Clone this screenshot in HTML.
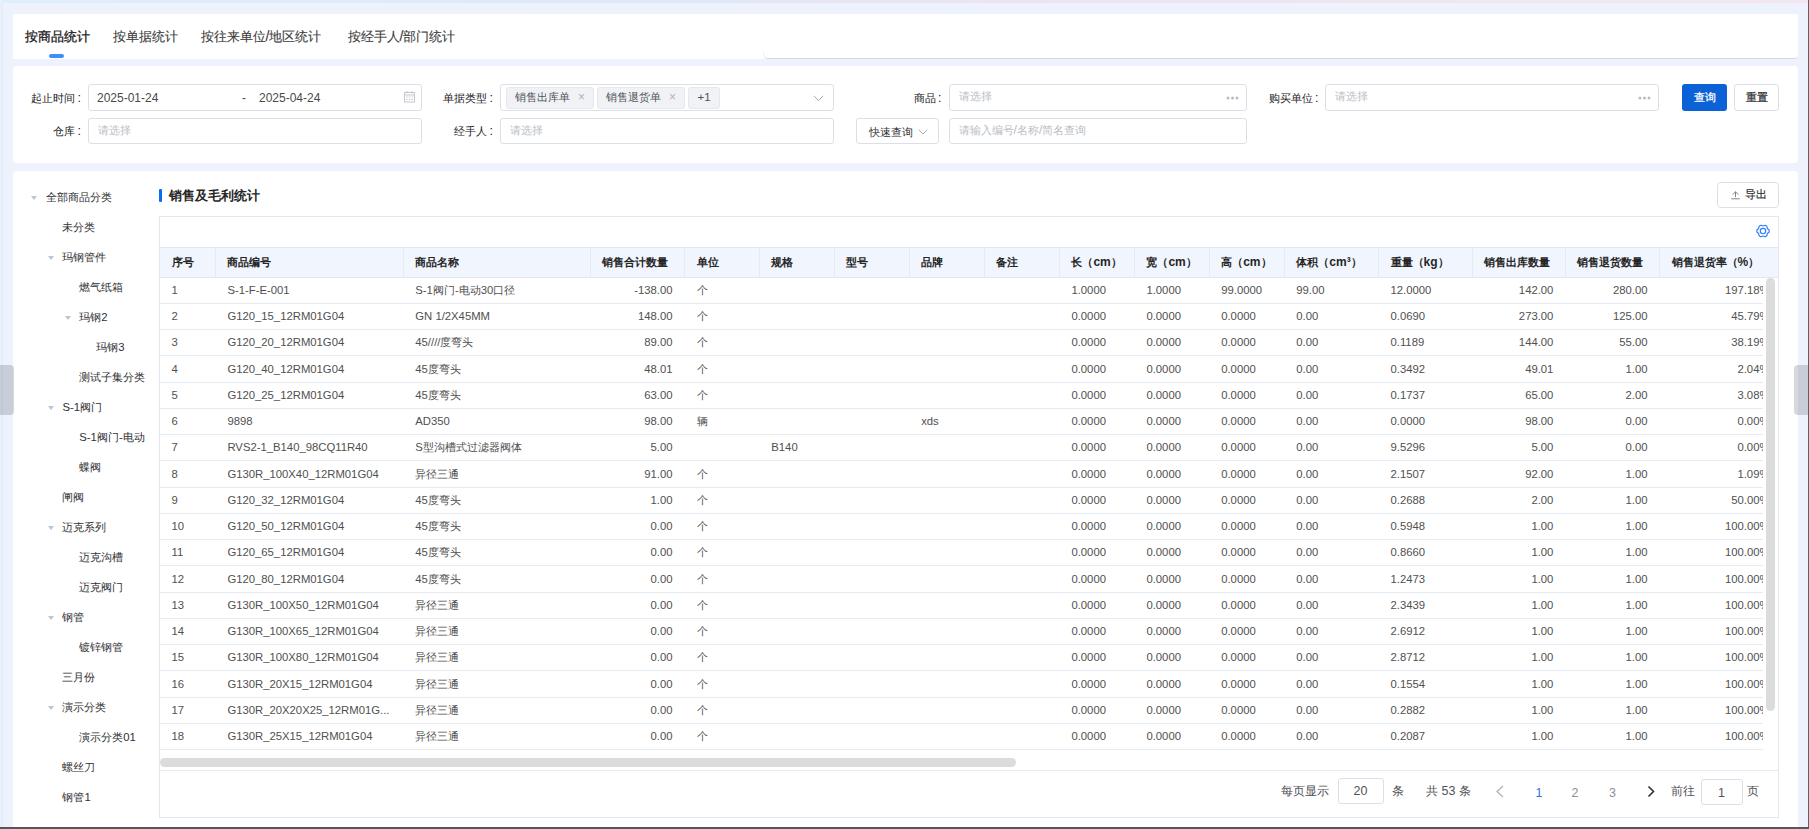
<!DOCTYPE html><html><head><meta charset="utf-8"><style>
*{box-sizing:border-box;margin:0;padding:0}
html,body{width:1809px;height:829px;overflow:hidden}
body{position:relative;background:#eef2fc;font-family:"Liberation Sans",sans-serif;color:#333;font-size:12px}
.a{position:absolute}
.nw{white-space:nowrap}
.c{font-size:0.92em}
.topstrip{left:0;top:0;width:1809px;height:3px;background:linear-gradient(90deg,#ddeefc 0%,#dde9f9 33%,#ece4f2 55%,#f3e6f0 100%)}
.leftstrip{left:0;top:0;width:2px;height:829px;background:#e5f1fd}
.leftline{left:2px;top:3px;width:1px;height:826px;background:#e8ebf3}
.card{background:#fff}
.tab{top:22px;height:28px;line-height:28px;font-size:14.2px;color:#303133}
.lbl{font-size:12.4px;color:#222;text-align:right;white-space:nowrap}
.inp{background:#fff;border:1px solid #dcdfe6;border-radius:3px}
.ph{color:#b9bdc5;font-size:12.4px;white-space:nowrap}
.tag{background:#f0f2f5;border:1px solid #e4e7ed;border-radius:3px;color:#505257;font-size:11.5px;white-space:nowrap}
.tree{font-size:11.3px;color:#303133;white-space:nowrap}
.tri{width:0;height:0;border-left:3.5px solid transparent;border-right:3.5px solid transparent;border-top:4px solid #c0c4cc}
.td .c{font-size:11px}
.tree .c{font-size:11.15px}
.th{font-weight:bold;color:#262626;font-size:12px;white-space:nowrap}
.td{color:#505050;font-size:11.3px;white-space:nowrap}
.pg{font-size:12.5px}
.pg .c{font-size:12.4px}
.hl{height:1px;background:#e6eaf2}
.vl{width:1px;background:#e6eaf2}
</style></head><body>
<div class="a topstrip"></div><div class="a leftstrip"></div><div class="a leftline"></div>
<div class="a" style="left:1808px;top:0;width:1px;height:829px;background:#606068"></div>
<div class="a card" style="left:13px;top:14px;width:1785px;height:45px;border-radius:0 0 4px 0"></div>
<div class="a" style="left:763px;top:52.5px;width:1035px;height:6.5px;border-left:1px solid #ebecf0;border-bottom:1px solid #d8d9e0;border-radius:0 0 4px 5px"></div>
<div class="a tab nw" style="left:24.5px;color:#1a1a1a;-webkit-text-stroke:0.3px #1a1a1a"><span class="c">按商品统计</span></div>
<div class="a tab nw" style="left:112.5px;color:#3c3c3c;-webkit-text-stroke:0.12px #3c3c3c"><span class="c">按单据统计</span></div>
<div class="a tab nw" style="left:200.5px;color:#3c3c3c;-webkit-text-stroke:0.12px #3c3c3c"><span class="c">按往来单位</span>/<span class="c">地区统计</span></div>
<div class="a tab nw" style="left:347.5px;color:#3c3c3c;-webkit-text-stroke:0.12px #3c3c3c"><span class="c">按经手人</span>/<span class="c">部门统计</span></div>
<div class="a" style="left:49px;top:54px;width:15px;height:4px;border-radius:2px;background:#3e8ef7"></div>
<div class="a card" style="left:13px;top:66px;width:1785px;height:97px;border-radius:4px"></div>
<div class="a lbl" style="right:1728px;top:89.5px;line-height:16px"><span class="c">起止时间</span><span style="margin-left:2.5px">:</span></div>
<div class="a lbl" style="right:1728px;top:123px;line-height:16px"><span class="c">仓库</span><span style="margin-left:2.5px">:</span></div>
<div class="a lbl" style="right:1316px;top:89.5px;line-height:16px"><span class="c">单据类型</span><span style="margin-left:2.5px">:</span></div>
<div class="a lbl" style="right:1316px;top:123px;line-height:16px"><span class="c">经手人</span><span style="margin-left:2.5px">:</span></div>
<div class="a lbl" style="right:867.5px;top:89.5px;line-height:16px"><span class="c">商品</span><span style="margin-left:2.5px">:</span></div>
<div class="a lbl" style="right:490.5px;top:89.5px;line-height:16px"><span class="c">购买单位</span><span style="margin-left:2.5px">:</span></div>
<div class="a inp" style="left:88px;top:84px;width:334px;height:27px"><div class="a nw" style="left:8px;top:5.3px;line-height:16px;color:#4a4a4a">2025-01-24</div><div class="a" style="left:153px;top:5.3px;line-height:16px;color:#4a4a4a">-</div><div class="a nw" style="left:170px;top:5.3px;line-height:16px;color:#4a4a4a">2025-04-24</div><svg class="a" style="left:314px;top:5.2px" width="13" height="13" viewBox="0 0 13 13"><g fill="none" stroke="#c4c7cf" stroke-width="1"><rect x="1.5" y="2.5" width="10" height="9.5"/><line x1="1.5" y1="5" x2="11.5" y2="5"/><line x1="4" y1="1" x2="4" y2="3.5"/><line x1="9" y1="1" x2="9" y2="3.5"/></g><g fill="#c4c7cf"><rect x="3" y="6.5" width="1.5" height="1"/><rect x="5.8" y="6.5" width="1.5" height="1"/><rect x="8.5" y="6.5" width="1.5" height="1"/><rect x="3" y="9" width="1.5" height="1"/><rect x="5.8" y="9" width="1.5" height="1"/><rect x="8.5" y="9" width="1.5" height="1"/></g></svg></div>
<div class="a inp" style="left:88px;top:118px;width:334px;height:26px"><div class="a ph" style="left:9px;top:3.4px;line-height:16px"><span class="c">请选择</span></div></div>
<div class="a inp" style="left:500px;top:84px;width:334px;height:27px"><div class="a tag" style="left:5px;top:1.8px;width:88px;height:22px;line-height:19px;padding-left:8px"><span class="c">销售出库单</span><span class="a" style="left:71px;top:0.5px;color:#b0b3b9;font-size:12px">×</span></div><div class="a tag" style="left:96px;top:1.8px;width:88px;height:22px;line-height:19px;padding-left:8px"><span class="c">销售退货单</span><span class="a" style="left:71px;top:0.5px;color:#b0b3b9;font-size:12px">×</span></div><div class="a tag" style="left:187px;top:1.8px;width:32px;height:22px;line-height:19.5px;text-align:center">+1</div><svg class="a" style="left:312px;top:10px" width="11" height="7" viewBox="0 0 11 7"><polyline points="0.8,0.8 5.5,5.5 10.2,0.8" fill="none" stroke="#a8abb2" stroke-width="1"/></svg></div>
<div class="a inp" style="left:500px;top:118px;width:334px;height:26px"><div class="a ph" style="left:9px;top:3.4px;line-height:16px"><span class="c">请选择</span></div></div>
<div class="a inp" style="left:948.5px;top:84px;width:298px;height:27px"><div class="a ph" style="left:9px;top:3.4px;line-height:16px"><span class="c">请选择</span></div><svg class="a" style="left:276px;top:11px" width="13" height="4" viewBox="0 0 13 4"><circle cx="2" cy="2" r="1.5" fill="#b9bcc3"/><circle cx="6.5" cy="2" r="1.5" fill="#b9bcc3"/><circle cx="11" cy="2" r="1.5" fill="#b9bcc3"/></svg></div>
<div class="a inp" style="left:1325px;top:84px;width:333.5px;height:27px"><div class="a ph" style="left:9px;top:3.4px;line-height:16px"><span class="c">请选择</span></div><svg class="a" style="left:312px;top:11px" width="13" height="4" viewBox="0 0 13 4"><circle cx="2" cy="2" r="1.5" fill="#b9bcc3"/><circle cx="6.5" cy="2" r="1.5" fill="#b9bcc3"/><circle cx="11" cy="2" r="1.5" fill="#b9bcc3"/></svg></div>
<div class="a inp" style="left:856px;top:118px;width:82.5px;height:26px"><div class="a nw" style="left:12px;top:5px;line-height:16px;color:#303133"><span class="c">快速查询</span></div><svg class="a" style="left:61px;top:10px" width="10" height="6" viewBox="0 0 10 6"><polyline points="0.7,0.7 5,5 9.3,0.7" fill="none" stroke="#a8abb2" stroke-width="1"/></svg></div>
<div class="a inp" style="left:948.5px;top:118px;width:298px;height:26px"><div class="a ph" style="left:9px;top:3.4px;line-height:16px"><span class="c">请输入编号</span>/<span class="c">名称</span>/<span class="c">简名查询</span></div></div>
<div class="a" style="left:1682px;top:84px;width:45px;height:27px;background:#0b62d6;border-radius:3px;color:#fff;text-align:center;line-height:27px;font-size:12.3px;-webkit-text-stroke:0.25px #fff"><span class="c">查询</span></div>
<div class="a inp" style="left:1734px;top:84px;width:45px;height:27px;color:#303133;text-align:center;line-height:25px;font-size:12.3px;-webkit-text-stroke:0.25px #303133"><span class="c">重置</span></div>
<div class="a card" style="left:13px;top:171px;width:1785px;height:700px;border-radius:4px"></div>
<div class="a tri" style="left:31px;top:195.8px"></div>
<div class="a tree" style="left:45.5px;top:189.3px;line-height:16px"><span class="c">全部商品分类</span></div>
<div class="a tree" style="left:62.4px;top:219.3px;line-height:16px"><span class="c">未分类</span></div>
<div class="a tri" style="left:47.9px;top:255.8px"></div>
<div class="a tree" style="left:62.4px;top:249.3px;line-height:16px"><span class="c">玛钢管件</span></div>
<div class="a tree" style="left:79.3px;top:279.3px;line-height:16px"><span class="c">燃气纸箱</span></div>
<div class="a tri" style="left:64.8px;top:315.8px"></div>
<div class="a tree" style="left:79.3px;top:309.3px;line-height:16px"><span class="c">玛钢</span>2</div>
<div class="a tree" style="left:96.2px;top:339.3px;line-height:16px"><span class="c">玛钢</span>3</div>
<div class="a tree" style="left:79.3px;top:369.3px;line-height:16px"><span class="c">测试子集分类</span></div>
<div class="a tri" style="left:47.9px;top:405.8px"></div>
<div class="a tree" style="left:62.4px;top:399.3px;line-height:16px">S-1<span class="c">阀门</span></div>
<div class="a tree" style="left:79.3px;top:429.3px;line-height:16px">S-1<span class="c">阀门</span>-<span class="c">电动</span></div>
<div class="a tree" style="left:79.3px;top:459.3px;line-height:16px"><span class="c">蝶阀</span></div>
<div class="a tree" style="left:62.4px;top:489.3px;line-height:16px"><span class="c">闸阀</span></div>
<div class="a tri" style="left:47.9px;top:525.8px"></div>
<div class="a tree" style="left:62.4px;top:519.3px;line-height:16px"><span class="c">迈克系列</span></div>
<div class="a tree" style="left:79.3px;top:549.3px;line-height:16px"><span class="c">迈克沟槽</span></div>
<div class="a tree" style="left:79.3px;top:579.3px;line-height:16px"><span class="c">迈克阀门</span></div>
<div class="a tri" style="left:47.9px;top:615.8px"></div>
<div class="a tree" style="left:62.4px;top:609.3px;line-height:16px"><span class="c">钢管</span></div>
<div class="a tree" style="left:79.3px;top:639.3px;line-height:16px"><span class="c">镀锌钢管</span></div>
<div class="a tree" style="left:62.4px;top:669.3px;line-height:16px"><span class="c">三月份</span></div>
<div class="a tri" style="left:47.9px;top:705.8px"></div>
<div class="a tree" style="left:62.4px;top:699.3px;line-height:16px"><span class="c">演示分类</span></div>
<div class="a tree" style="left:79.3px;top:729.3px;line-height:16px"><span class="c">演示分类</span>01</div>
<div class="a tree" style="left:62.4px;top:759.3px;line-height:16px"><span class="c">螺丝刀</span></div>
<div class="a tree" style="left:62.4px;top:789.3px;line-height:16px"><span class="c">钢管</span>1</div>
<div class="a" style="left:0;top:365px;width:13.5px;height:50px;background:rgba(20,25,40,0.17);border-radius:0 4px 4px 0"></div>
<div class="a" style="left:1794px;top:365px;width:14px;height:50px;background:rgba(20,25,40,0.17);border-radius:4px 0 0 4px"></div>
<div class="a" style="left:159px;top:189px;width:3px;height:12.5px;background:#0a6cf5;border-radius:1px"></div>
<div class="a nw" style="left:168.5px;top:186px;line-height:18px;font-size:14.25px;font-weight:bold;color:#262626"><span class="c">销售及毛利统计</span></div>
<div class="a inp" style="left:1717px;top:182px;width:62px;height:26px;border-radius:4px"><svg class="a" style="left:12.5px;top:8px" width="9" height="9" viewBox="0 0 9 9"><g fill="none" stroke="#777" stroke-width="0.9"><line x1="0.3" y1="7.8" x2="8.7" y2="7.8"/><line x1="4.5" y1="0.8" x2="4.5" y2="6.2"/><polyline points="1.6,3.6 4.5,0.8 7.4,3.6"/></g></svg><div class="a nw" style="left:27px;top:3px;line-height:16px;color:#303133;font-size:12.3px;-webkit-text-stroke:0.2px #303133"><span class="c">导出</span></div></div>
<div class="a" style="left:159px;top:216px;width:1620px;height:601.5px;border:1px solid #e3e7f0"></div>
<svg class="a" style="left:1756.2px;top:224.4px" width="14" height="14" viewBox="0 0 14 14"><polygon points="13.12,6.03 13.12,7.97 11.33,9.50 10.90,11.82 9.22,12.79 7.00,12.00 4.78,12.79 3.10,11.82 2.67,9.50 0.88,7.97 0.88,6.03 2.67,4.50 3.10,2.18 4.78,1.21 7.00,2.00 9.22,1.21 10.90,2.18 11.33,4.50" fill="none" stroke="#2f7cff" stroke-width="1.15" stroke-linejoin="round"/><circle cx="7" cy="7" r="2.7" fill="none" stroke="#2f7cff" stroke-width="1.15"/></svg>
<div class="a" style="left:160px;top:247px;width:1618px;height:30.5px;background:#f1f5fd;border-top:1px solid #e3e7f0;border-bottom:1px solid #e3e7f0"></div>
<div class="a" style="left:160px;top:277.5px;width:1603px;height:472.5px;overflow:hidden">
<div class="a hl" style="left:0;top:25.25px;width:1625px"></div>
<div class="a td" style="left:11.5px;top:4.3px;line-height:16px">1</div>
<div class="a td" style="left:67.4px;top:4.3px;line-height:16px">S-1-F-E-001</div>
<div class="a td" style="left:255.3px;top:4.3px;line-height:16px">S-1<span class="c">阀门</span>-<span class="c">电动</span>30<span class="c">口径</span></div>
<div class="a td" style="right:1090.5px;top:4.3px;line-height:16px">-138.00</div>
<div class="a td" style="left:536.5px;top:4.3px;line-height:16px"><span class="c">个</span></div>
<div class="a td" style="left:911.4px;top:4.3px;line-height:16px">1.0000</div>
<div class="a td" style="left:986.4px;top:4.3px;line-height:16px">1.0000</div>
<div class="a td" style="left:1061.2px;top:4.3px;line-height:16px">99.0000</div>
<div class="a td" style="left:1136.3px;top:4.3px;line-height:16px">99.00</div>
<div class="a td" style="left:1230.5px;top:4.3px;line-height:16px">12.0000</div>
<div class="a td" style="right:209.6px;top:4.3px;line-height:16px">142.00</div>
<div class="a td" style="right:115.5px;top:4.3px;line-height:16px">280.00</div>
<div class="a td" style="right:-6.5px;top:4.3px;line-height:16px">197.18%</div>
<div class="a hl" style="left:0;top:51.5px;width:1625px"></div>
<div class="a td" style="left:11.5px;top:30.55px;line-height:16px">2</div>
<div class="a td" style="left:67.4px;top:30.55px;line-height:16px">G120_15_12RM01G04</div>
<div class="a td" style="left:255.3px;top:30.55px;line-height:16px">GN 1/2X45MM</div>
<div class="a td" style="right:1090.5px;top:30.55px;line-height:16px">148.00</div>
<div class="a td" style="left:536.5px;top:30.55px;line-height:16px"><span class="c">个</span></div>
<div class="a td" style="left:911.4px;top:30.55px;line-height:16px">0.0000</div>
<div class="a td" style="left:986.4px;top:30.55px;line-height:16px">0.0000</div>
<div class="a td" style="left:1061.2px;top:30.55px;line-height:16px">0.0000</div>
<div class="a td" style="left:1136.3px;top:30.55px;line-height:16px">0.00</div>
<div class="a td" style="left:1230.5px;top:30.55px;line-height:16px">0.0690</div>
<div class="a td" style="right:209.6px;top:30.55px;line-height:16px">273.00</div>
<div class="a td" style="right:115.5px;top:30.55px;line-height:16px">125.00</div>
<div class="a td" style="right:-6.5px;top:30.55px;line-height:16px">45.79%</div>
<div class="a hl" style="left:0;top:77.75px;width:1625px"></div>
<div class="a td" style="left:11.5px;top:56.8px;line-height:16px">3</div>
<div class="a td" style="left:67.4px;top:56.8px;line-height:16px">G120_20_12RM01G04</div>
<div class="a td" style="left:255.3px;top:56.8px;line-height:16px">45////<span class="c">度弯头</span></div>
<div class="a td" style="right:1090.5px;top:56.8px;line-height:16px">89.00</div>
<div class="a td" style="left:536.5px;top:56.8px;line-height:16px"><span class="c">个</span></div>
<div class="a td" style="left:911.4px;top:56.8px;line-height:16px">0.0000</div>
<div class="a td" style="left:986.4px;top:56.8px;line-height:16px">0.0000</div>
<div class="a td" style="left:1061.2px;top:56.8px;line-height:16px">0.0000</div>
<div class="a td" style="left:1136.3px;top:56.8px;line-height:16px">0.00</div>
<div class="a td" style="left:1230.5px;top:56.8px;line-height:16px">0.1189</div>
<div class="a td" style="right:209.6px;top:56.8px;line-height:16px">144.00</div>
<div class="a td" style="right:115.5px;top:56.8px;line-height:16px">55.00</div>
<div class="a td" style="right:-6.5px;top:56.8px;line-height:16px">38.19%</div>
<div class="a hl" style="left:0;top:104px;width:1625px"></div>
<div class="a td" style="left:11.5px;top:83.05px;line-height:16px">4</div>
<div class="a td" style="left:67.4px;top:83.05px;line-height:16px">G120_40_12RM01G04</div>
<div class="a td" style="left:255.3px;top:83.05px;line-height:16px">45<span class="c">度弯头</span></div>
<div class="a td" style="right:1090.5px;top:83.05px;line-height:16px">48.01</div>
<div class="a td" style="left:536.5px;top:83.05px;line-height:16px"><span class="c">个</span></div>
<div class="a td" style="left:911.4px;top:83.05px;line-height:16px">0.0000</div>
<div class="a td" style="left:986.4px;top:83.05px;line-height:16px">0.0000</div>
<div class="a td" style="left:1061.2px;top:83.05px;line-height:16px">0.0000</div>
<div class="a td" style="left:1136.3px;top:83.05px;line-height:16px">0.00</div>
<div class="a td" style="left:1230.5px;top:83.05px;line-height:16px">0.3492</div>
<div class="a td" style="right:209.6px;top:83.05px;line-height:16px">49.01</div>
<div class="a td" style="right:115.5px;top:83.05px;line-height:16px">1.00</div>
<div class="a td" style="right:-6.5px;top:83.05px;line-height:16px">2.04%</div>
<div class="a hl" style="left:0;top:130.25px;width:1625px"></div>
<div class="a td" style="left:11.5px;top:109.3px;line-height:16px">5</div>
<div class="a td" style="left:67.4px;top:109.3px;line-height:16px">G120_25_12RM01G04</div>
<div class="a td" style="left:255.3px;top:109.3px;line-height:16px">45<span class="c">度弯头</span></div>
<div class="a td" style="right:1090.5px;top:109.3px;line-height:16px">63.00</div>
<div class="a td" style="left:536.5px;top:109.3px;line-height:16px"><span class="c">个</span></div>
<div class="a td" style="left:911.4px;top:109.3px;line-height:16px">0.0000</div>
<div class="a td" style="left:986.4px;top:109.3px;line-height:16px">0.0000</div>
<div class="a td" style="left:1061.2px;top:109.3px;line-height:16px">0.0000</div>
<div class="a td" style="left:1136.3px;top:109.3px;line-height:16px">0.00</div>
<div class="a td" style="left:1230.5px;top:109.3px;line-height:16px">0.1737</div>
<div class="a td" style="right:209.6px;top:109.3px;line-height:16px">65.00</div>
<div class="a td" style="right:115.5px;top:109.3px;line-height:16px">2.00</div>
<div class="a td" style="right:-6.5px;top:109.3px;line-height:16px">3.08%</div>
<div class="a hl" style="left:0;top:156.5px;width:1625px"></div>
<div class="a td" style="left:11.5px;top:135.55px;line-height:16px">6</div>
<div class="a td" style="left:67.4px;top:135.55px;line-height:16px">9898</div>
<div class="a td" style="left:255.3px;top:135.55px;line-height:16px">AD350</div>
<div class="a td" style="right:1090.5px;top:135.55px;line-height:16px">98.00</div>
<div class="a td" style="left:536.5px;top:135.55px;line-height:16px"><span class="c">辆</span></div>
<div class="a td" style="left:761.2px;top:135.55px;line-height:16px">xds</div>
<div class="a td" style="left:911.4px;top:135.55px;line-height:16px">0.0000</div>
<div class="a td" style="left:986.4px;top:135.55px;line-height:16px">0.0000</div>
<div class="a td" style="left:1061.2px;top:135.55px;line-height:16px">0.0000</div>
<div class="a td" style="left:1136.3px;top:135.55px;line-height:16px">0.00</div>
<div class="a td" style="left:1230.5px;top:135.55px;line-height:16px">0.0000</div>
<div class="a td" style="right:209.6px;top:135.55px;line-height:16px">98.00</div>
<div class="a td" style="right:115.5px;top:135.55px;line-height:16px">0.00</div>
<div class="a td" style="right:-6.5px;top:135.55px;line-height:16px">0.00%</div>
<div class="a hl" style="left:0;top:182.75px;width:1625px"></div>
<div class="a td" style="left:11.5px;top:161.8px;line-height:16px">7</div>
<div class="a td" style="left:67.4px;top:161.8px;line-height:16px">RVS2-1_B140_98CQ11R40</div>
<div class="a td" style="left:255.3px;top:161.8px;line-height:16px">S<span class="c">型沟槽式过滤器阀体</span></div>
<div class="a td" style="right:1090.5px;top:161.8px;line-height:16px">5.00</div>
<div class="a td" style="left:611.3px;top:161.8px;line-height:16px">B140</div>
<div class="a td" style="left:911.4px;top:161.8px;line-height:16px">0.0000</div>
<div class="a td" style="left:986.4px;top:161.8px;line-height:16px">0.0000</div>
<div class="a td" style="left:1061.2px;top:161.8px;line-height:16px">0.0000</div>
<div class="a td" style="left:1136.3px;top:161.8px;line-height:16px">0.00</div>
<div class="a td" style="left:1230.5px;top:161.8px;line-height:16px">9.5296</div>
<div class="a td" style="right:209.6px;top:161.8px;line-height:16px">5.00</div>
<div class="a td" style="right:115.5px;top:161.8px;line-height:16px">0.00</div>
<div class="a td" style="right:-6.5px;top:161.8px;line-height:16px">0.00%</div>
<div class="a hl" style="left:0;top:209px;width:1625px"></div>
<div class="a td" style="left:11.5px;top:188.05px;line-height:16px">8</div>
<div class="a td" style="left:67.4px;top:188.05px;line-height:16px">G130R_100X40_12RM01G04</div>
<div class="a td" style="left:255.3px;top:188.05px;line-height:16px"><span class="c">异径三通</span></div>
<div class="a td" style="right:1090.5px;top:188.05px;line-height:16px">91.00</div>
<div class="a td" style="left:536.5px;top:188.05px;line-height:16px"><span class="c">个</span></div>
<div class="a td" style="left:911.4px;top:188.05px;line-height:16px">0.0000</div>
<div class="a td" style="left:986.4px;top:188.05px;line-height:16px">0.0000</div>
<div class="a td" style="left:1061.2px;top:188.05px;line-height:16px">0.0000</div>
<div class="a td" style="left:1136.3px;top:188.05px;line-height:16px">0.00</div>
<div class="a td" style="left:1230.5px;top:188.05px;line-height:16px">2.1507</div>
<div class="a td" style="right:209.6px;top:188.05px;line-height:16px">92.00</div>
<div class="a td" style="right:115.5px;top:188.05px;line-height:16px">1.00</div>
<div class="a td" style="right:-6.5px;top:188.05px;line-height:16px">1.09%</div>
<div class="a hl" style="left:0;top:235.25px;width:1625px"></div>
<div class="a td" style="left:11.5px;top:214.3px;line-height:16px">9</div>
<div class="a td" style="left:67.4px;top:214.3px;line-height:16px">G120_32_12RM01G04</div>
<div class="a td" style="left:255.3px;top:214.3px;line-height:16px">45<span class="c">度弯头</span></div>
<div class="a td" style="right:1090.5px;top:214.3px;line-height:16px">1.00</div>
<div class="a td" style="left:536.5px;top:214.3px;line-height:16px"><span class="c">个</span></div>
<div class="a td" style="left:911.4px;top:214.3px;line-height:16px">0.0000</div>
<div class="a td" style="left:986.4px;top:214.3px;line-height:16px">0.0000</div>
<div class="a td" style="left:1061.2px;top:214.3px;line-height:16px">0.0000</div>
<div class="a td" style="left:1136.3px;top:214.3px;line-height:16px">0.00</div>
<div class="a td" style="left:1230.5px;top:214.3px;line-height:16px">0.2688</div>
<div class="a td" style="right:209.6px;top:214.3px;line-height:16px">2.00</div>
<div class="a td" style="right:115.5px;top:214.3px;line-height:16px">1.00</div>
<div class="a td" style="right:-6.5px;top:214.3px;line-height:16px">50.00%</div>
<div class="a hl" style="left:0;top:261.5px;width:1625px"></div>
<div class="a td" style="left:11.5px;top:240.55px;line-height:16px">10</div>
<div class="a td" style="left:67.4px;top:240.55px;line-height:16px">G120_50_12RM01G04</div>
<div class="a td" style="left:255.3px;top:240.55px;line-height:16px">45<span class="c">度弯头</span></div>
<div class="a td" style="right:1090.5px;top:240.55px;line-height:16px">0.00</div>
<div class="a td" style="left:536.5px;top:240.55px;line-height:16px"><span class="c">个</span></div>
<div class="a td" style="left:911.4px;top:240.55px;line-height:16px">0.0000</div>
<div class="a td" style="left:986.4px;top:240.55px;line-height:16px">0.0000</div>
<div class="a td" style="left:1061.2px;top:240.55px;line-height:16px">0.0000</div>
<div class="a td" style="left:1136.3px;top:240.55px;line-height:16px">0.00</div>
<div class="a td" style="left:1230.5px;top:240.55px;line-height:16px">0.5948</div>
<div class="a td" style="right:209.6px;top:240.55px;line-height:16px">1.00</div>
<div class="a td" style="right:115.5px;top:240.55px;line-height:16px">1.00</div>
<div class="a td" style="right:-6.5px;top:240.55px;line-height:16px">100.00%</div>
<div class="a hl" style="left:0;top:287.75px;width:1625px"></div>
<div class="a td" style="left:11.5px;top:266.8px;line-height:16px">11</div>
<div class="a td" style="left:67.4px;top:266.8px;line-height:16px">G120_65_12RM01G04</div>
<div class="a td" style="left:255.3px;top:266.8px;line-height:16px">45<span class="c">度弯头</span></div>
<div class="a td" style="right:1090.5px;top:266.8px;line-height:16px">0.00</div>
<div class="a td" style="left:536.5px;top:266.8px;line-height:16px"><span class="c">个</span></div>
<div class="a td" style="left:911.4px;top:266.8px;line-height:16px">0.0000</div>
<div class="a td" style="left:986.4px;top:266.8px;line-height:16px">0.0000</div>
<div class="a td" style="left:1061.2px;top:266.8px;line-height:16px">0.0000</div>
<div class="a td" style="left:1136.3px;top:266.8px;line-height:16px">0.00</div>
<div class="a td" style="left:1230.5px;top:266.8px;line-height:16px">0.8660</div>
<div class="a td" style="right:209.6px;top:266.8px;line-height:16px">1.00</div>
<div class="a td" style="right:115.5px;top:266.8px;line-height:16px">1.00</div>
<div class="a td" style="right:-6.5px;top:266.8px;line-height:16px">100.00%</div>
<div class="a hl" style="left:0;top:314px;width:1625px"></div>
<div class="a td" style="left:11.5px;top:293.05px;line-height:16px">12</div>
<div class="a td" style="left:67.4px;top:293.05px;line-height:16px">G120_80_12RM01G04</div>
<div class="a td" style="left:255.3px;top:293.05px;line-height:16px">45<span class="c">度弯头</span></div>
<div class="a td" style="right:1090.5px;top:293.05px;line-height:16px">0.00</div>
<div class="a td" style="left:536.5px;top:293.05px;line-height:16px"><span class="c">个</span></div>
<div class="a td" style="left:911.4px;top:293.05px;line-height:16px">0.0000</div>
<div class="a td" style="left:986.4px;top:293.05px;line-height:16px">0.0000</div>
<div class="a td" style="left:1061.2px;top:293.05px;line-height:16px">0.0000</div>
<div class="a td" style="left:1136.3px;top:293.05px;line-height:16px">0.00</div>
<div class="a td" style="left:1230.5px;top:293.05px;line-height:16px">1.2473</div>
<div class="a td" style="right:209.6px;top:293.05px;line-height:16px">1.00</div>
<div class="a td" style="right:115.5px;top:293.05px;line-height:16px">1.00</div>
<div class="a td" style="right:-6.5px;top:293.05px;line-height:16px">100.00%</div>
<div class="a hl" style="left:0;top:340.25px;width:1625px"></div>
<div class="a td" style="left:11.5px;top:319.3px;line-height:16px">13</div>
<div class="a td" style="left:67.4px;top:319.3px;line-height:16px">G130R_100X50_12RM01G04</div>
<div class="a td" style="left:255.3px;top:319.3px;line-height:16px"><span class="c">异径三通</span></div>
<div class="a td" style="right:1090.5px;top:319.3px;line-height:16px">0.00</div>
<div class="a td" style="left:536.5px;top:319.3px;line-height:16px"><span class="c">个</span></div>
<div class="a td" style="left:911.4px;top:319.3px;line-height:16px">0.0000</div>
<div class="a td" style="left:986.4px;top:319.3px;line-height:16px">0.0000</div>
<div class="a td" style="left:1061.2px;top:319.3px;line-height:16px">0.0000</div>
<div class="a td" style="left:1136.3px;top:319.3px;line-height:16px">0.00</div>
<div class="a td" style="left:1230.5px;top:319.3px;line-height:16px">2.3439</div>
<div class="a td" style="right:209.6px;top:319.3px;line-height:16px">1.00</div>
<div class="a td" style="right:115.5px;top:319.3px;line-height:16px">1.00</div>
<div class="a td" style="right:-6.5px;top:319.3px;line-height:16px">100.00%</div>
<div class="a hl" style="left:0;top:366.5px;width:1625px"></div>
<div class="a td" style="left:11.5px;top:345.55px;line-height:16px">14</div>
<div class="a td" style="left:67.4px;top:345.55px;line-height:16px">G130R_100X65_12RM01G04</div>
<div class="a td" style="left:255.3px;top:345.55px;line-height:16px"><span class="c">异径三通</span></div>
<div class="a td" style="right:1090.5px;top:345.55px;line-height:16px">0.00</div>
<div class="a td" style="left:536.5px;top:345.55px;line-height:16px"><span class="c">个</span></div>
<div class="a td" style="left:911.4px;top:345.55px;line-height:16px">0.0000</div>
<div class="a td" style="left:986.4px;top:345.55px;line-height:16px">0.0000</div>
<div class="a td" style="left:1061.2px;top:345.55px;line-height:16px">0.0000</div>
<div class="a td" style="left:1136.3px;top:345.55px;line-height:16px">0.00</div>
<div class="a td" style="left:1230.5px;top:345.55px;line-height:16px">2.6912</div>
<div class="a td" style="right:209.6px;top:345.55px;line-height:16px">1.00</div>
<div class="a td" style="right:115.5px;top:345.55px;line-height:16px">1.00</div>
<div class="a td" style="right:-6.5px;top:345.55px;line-height:16px">100.00%</div>
<div class="a hl" style="left:0;top:392.75px;width:1625px"></div>
<div class="a td" style="left:11.5px;top:371.8px;line-height:16px">15</div>
<div class="a td" style="left:67.4px;top:371.8px;line-height:16px">G130R_100X80_12RM01G04</div>
<div class="a td" style="left:255.3px;top:371.8px;line-height:16px"><span class="c">异径三通</span></div>
<div class="a td" style="right:1090.5px;top:371.8px;line-height:16px">0.00</div>
<div class="a td" style="left:536.5px;top:371.8px;line-height:16px"><span class="c">个</span></div>
<div class="a td" style="left:911.4px;top:371.8px;line-height:16px">0.0000</div>
<div class="a td" style="left:986.4px;top:371.8px;line-height:16px">0.0000</div>
<div class="a td" style="left:1061.2px;top:371.8px;line-height:16px">0.0000</div>
<div class="a td" style="left:1136.3px;top:371.8px;line-height:16px">0.00</div>
<div class="a td" style="left:1230.5px;top:371.8px;line-height:16px">2.8712</div>
<div class="a td" style="right:209.6px;top:371.8px;line-height:16px">1.00</div>
<div class="a td" style="right:115.5px;top:371.8px;line-height:16px">1.00</div>
<div class="a td" style="right:-6.5px;top:371.8px;line-height:16px">100.00%</div>
<div class="a hl" style="left:0;top:419px;width:1625px"></div>
<div class="a td" style="left:11.5px;top:398.05px;line-height:16px">16</div>
<div class="a td" style="left:67.4px;top:398.05px;line-height:16px">G130R_20X15_12RM01G04</div>
<div class="a td" style="left:255.3px;top:398.05px;line-height:16px"><span class="c">异径三通</span></div>
<div class="a td" style="right:1090.5px;top:398.05px;line-height:16px">0.00</div>
<div class="a td" style="left:536.5px;top:398.05px;line-height:16px"><span class="c">个</span></div>
<div class="a td" style="left:911.4px;top:398.05px;line-height:16px">0.0000</div>
<div class="a td" style="left:986.4px;top:398.05px;line-height:16px">0.0000</div>
<div class="a td" style="left:1061.2px;top:398.05px;line-height:16px">0.0000</div>
<div class="a td" style="left:1136.3px;top:398.05px;line-height:16px">0.00</div>
<div class="a td" style="left:1230.5px;top:398.05px;line-height:16px">0.1554</div>
<div class="a td" style="right:209.6px;top:398.05px;line-height:16px">1.00</div>
<div class="a td" style="right:115.5px;top:398.05px;line-height:16px">1.00</div>
<div class="a td" style="right:-6.5px;top:398.05px;line-height:16px">100.00%</div>
<div class="a hl" style="left:0;top:445.25px;width:1625px"></div>
<div class="a td" style="left:11.5px;top:424.3px;line-height:16px">17</div>
<div class="a td" style="left:67.4px;top:424.3px;line-height:16px">G130R_20X20X25_12RM01G...</div>
<div class="a td" style="left:255.3px;top:424.3px;line-height:16px"><span class="c">异径三通</span></div>
<div class="a td" style="right:1090.5px;top:424.3px;line-height:16px">0.00</div>
<div class="a td" style="left:536.5px;top:424.3px;line-height:16px"><span class="c">个</span></div>
<div class="a td" style="left:911.4px;top:424.3px;line-height:16px">0.0000</div>
<div class="a td" style="left:986.4px;top:424.3px;line-height:16px">0.0000</div>
<div class="a td" style="left:1061.2px;top:424.3px;line-height:16px">0.0000</div>
<div class="a td" style="left:1136.3px;top:424.3px;line-height:16px">0.00</div>
<div class="a td" style="left:1230.5px;top:424.3px;line-height:16px">0.2882</div>
<div class="a td" style="right:209.6px;top:424.3px;line-height:16px">1.00</div>
<div class="a td" style="right:115.5px;top:424.3px;line-height:16px">1.00</div>
<div class="a td" style="right:-6.5px;top:424.3px;line-height:16px">100.00%</div>
<div class="a hl" style="left:0;top:471.5px;width:1625px"></div>
<div class="a td" style="left:11.5px;top:450.55px;line-height:16px">18</div>
<div class="a td" style="left:67.4px;top:450.55px;line-height:16px">G130R_25X15_12RM01G04</div>
<div class="a td" style="left:255.3px;top:450.55px;line-height:16px"><span class="c">异径三通</span></div>
<div class="a td" style="right:1090.5px;top:450.55px;line-height:16px">0.00</div>
<div class="a td" style="left:536.5px;top:450.55px;line-height:16px"><span class="c">个</span></div>
<div class="a td" style="left:911.4px;top:450.55px;line-height:16px">0.0000</div>
<div class="a td" style="left:986.4px;top:450.55px;line-height:16px">0.0000</div>
<div class="a td" style="left:1061.2px;top:450.55px;line-height:16px">0.0000</div>
<div class="a td" style="left:1136.3px;top:450.55px;line-height:16px">0.00</div>
<div class="a td" style="left:1230.5px;top:450.55px;line-height:16px">0.2087</div>
<div class="a td" style="right:209.6px;top:450.55px;line-height:16px">1.00</div>
<div class="a td" style="right:115.5px;top:450.55px;line-height:16px">1.00</div>
<div class="a td" style="right:-6.5px;top:450.55px;line-height:16px">100.00%</div>
</div>
<div class="a th" style="left:171.5px;top:253.8px;line-height:16px"><span class="c">序号</span></div>
<div class="a vl" style="left:214.9px;top:247.5px;height:30px"></div>
<div class="a th" style="left:227.4px;top:253.8px;line-height:16px"><span class="c">商品编号</span></div>
<div class="a vl" style="left:402.8px;top:247.5px;height:30px"></div>
<div class="a th" style="left:415.3px;top:253.8px;line-height:16px"><span class="c">商品名称</span></div>
<div class="a vl" style="left:589.8px;top:247.5px;height:30px"></div>
<div class="a th" style="left:602.3px;top:253.8px;line-height:16px"><span class="c">销售合计数量</span></div>
<div class="a vl" style="left:684px;top:247.5px;height:30px"></div>
<div class="a th" style="left:696.5px;top:253.8px;line-height:16px"><span class="c">单位</span></div>
<div class="a vl" style="left:758.8px;top:247.5px;height:30px"></div>
<div class="a th" style="left:771.3px;top:253.8px;line-height:16px"><span class="c">规格</span></div>
<div class="a vl" style="left:833.9px;top:247.5px;height:30px"></div>
<div class="a th" style="left:846.4px;top:253.8px;line-height:16px"><span class="c">型号</span></div>
<div class="a vl" style="left:908.7px;top:247.5px;height:30px"></div>
<div class="a th" style="left:921.2px;top:253.8px;line-height:16px"><span class="c">品牌</span></div>
<div class="a vl" style="left:983.8px;top:247.5px;height:30px"></div>
<div class="a th" style="left:996.3px;top:253.8px;line-height:16px"><span class="c">备注</span></div>
<div class="a vl" style="left:1058.9px;top:247.5px;height:30px"></div>
<div class="a th" style="left:1071.4px;top:253.8px;line-height:16px"><span class="c">长（</span>cm<span class="c">）</span></div>
<div class="a vl" style="left:1133.9px;top:247.5px;height:30px"></div>
<div class="a th" style="left:1146.4px;top:253.8px;line-height:16px"><span class="c">宽（</span>cm<span class="c">）</span></div>
<div class="a vl" style="left:1208.7px;top:247.5px;height:30px"></div>
<div class="a th" style="left:1221.2px;top:253.8px;line-height:16px"><span class="c">高（</span>cm<span class="c">）</span></div>
<div class="a vl" style="left:1283.8px;top:247.5px;height:30px"></div>
<div class="a th" style="left:1296.3px;top:253.8px;line-height:16px"><span class="c">体积（</span>cm³<span class="c">）</span></div>
<div class="a vl" style="left:1378px;top:247.5px;height:30px"></div>
<div class="a th" style="left:1390.5px;top:253.8px;line-height:16px"><span class="c">重量（</span>kg<span class="c">）</span></div>
<div class="a vl" style="left:1471.9px;top:247.5px;height:30px"></div>
<div class="a th" style="left:1484.4px;top:253.8px;line-height:16px"><span class="c">销售出库数量</span></div>
<div class="a vl" style="left:1564.9px;top:247.5px;height:30px"></div>
<div class="a th" style="left:1577.4px;top:253.8px;line-height:16px"><span class="c">销售退货数量</span></div>
<div class="a vl" style="left:1659px;top:247.5px;height:30px"></div>
<div class="a th" style="left:1671.5px;top:253.8px;line-height:16px"><span class="c">销售退货率（</span>%<span class="c">）</span></div>
<div class="a" style="left:1779px;top:240px;width:19px;height:40px;background:#fff"></div>
<div class="a" style="left:1766px;top:278px;width:9px;height:433px;background:#dcdcdc;border-radius:4.5px"></div>
<div class="a" style="left:160px;top:758px;width:856px;height:9px;background:#dcdcdc;border-radius:4.5px"></div>
<div class="a hl" style="left:160px;top:770px;width:1618px"></div>
<div class="a nw pg" style="left:1281px;top:783px;line-height:16px;color:#505257"><span class="c">每页显示</span></div><div class="a inp pg" style="left:1337.5px;top:778px;width:46px;height:25.5px;text-align:center;line-height:25px;color:#505257">20</div><div class="a nw pg" style="left:1392px;top:783px;line-height:16px;color:#505257"><span class="c">条</span></div><div class="a nw pg" style="left:1426px;top:783px;line-height:16px;color:#505257"><span class="c">共</span> 53 <span class="c">条</span></div><svg class="a" style="left:1495px;top:785px" width="10" height="13" viewBox="0 0 10 13"><polyline points="8,1 2,6.5 8,12" fill="none" stroke="#b0b3b9" stroke-width="1.3"/></svg><div class="a nw pg" style="left:1535.5px;top:785px;line-height:16px;color:#2d74e8">1</div><div class="a nw pg" style="left:1571.5px;top:785px;line-height:16px;color:#8d9096">2</div><div class="a nw pg" style="left:1609px;top:785px;line-height:16px;color:#8d9096">3</div><svg class="a" style="left:1646px;top:785px" width="10" height="13" viewBox="0 0 10 13"><polyline points="2.5,1.5 7.5,6.5 2.5,11.5" fill="none" stroke="#303133" stroke-width="1.6"/></svg><div class="a nw pg" style="left:1671px;top:783px;line-height:16px;color:#505257"><span class="c">前往</span></div><div class="a inp pg" style="left:1700.5px;top:779.3px;width:42px;height:26px;text-align:center;line-height:26px;color:#505257">1</div><div class="a nw pg" style="left:1747px;top:783px;line-height:16px;color:#505257"><span class="c">页</span></div>
<div class="a" style="left:0;top:827px;width:1809px;height:2px;background:#56565c"></div>
</body></html>
